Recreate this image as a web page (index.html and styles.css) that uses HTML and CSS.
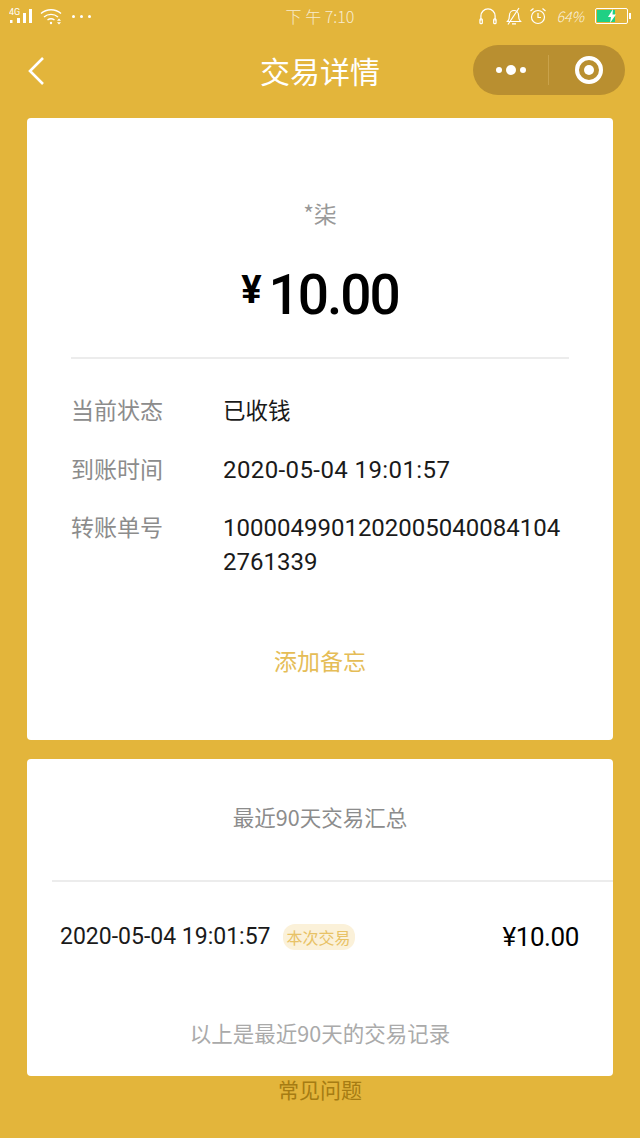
FILE: index.html
```html
<!DOCTYPE html>
<html lang="zh-CN">
<head>
  <meta charset="UTF-8"/>
  <meta name="viewport" content="width=device-width,initial-scale=1"/>
  <title>交易详情</title>
  <link rel="stylesheet" href="styles.css">
</head>
<body>

  <!-- STATUS BAR -->
  <div class="statusbar">
    <div class="status-left">
      <svg class="ic-signal" width="25" height="16" viewBox="0 0 25 16">
        <text x="0" y="6.500" class="ic-4g">4G</text>
        <rect x="1" y="12" width="2.500" height="3" fill="#fff"/>
        <rect x="8" y="10" width="3" height="5" fill="#fff"/>
        <rect x="14" y="5" width="3" height="10" fill="#fff"/>
        <rect x="20" y="1" width="3" height="14" fill="#fff"/>
      </svg>
      <svg class="ic-wifi" width="23" height="18" viewBox="0 0 23 18" fill="none" stroke="#fff" stroke-width="1.4">
        <path d="M1 6.500C6.500 1.500 15.500 1.500 21 6.500"/>
        <path d="M4 10C8 6.500 14 6.500 18 10"/>
        <path d="M7.500 13C9.500 11.500 12.500 11.500 14.500 13"/>
        <circle cx="11" cy="16" r="1.200" fill="#fff" stroke="none"/>
        <path d="M19 11.500l-2 2.200h4zM19 17.500l-2-2.200h4z" fill="#fff" stroke="none"/>
      </svg>
      <div class="dots3"><span></span><span></span><span></span></div>
    </div>
    <div class="status-time">下 午 7:10</div>
    <div class="status-right">
      <svg class="ic-phones" width="18" height="18" viewBox="0 0 19 18" fill="none" stroke="#fff" stroke-width="1.300">
        <path d="M2 14V9a7.500 7.500 0 0 1 15 0v5"/>
        <rect x="1" y="12" width="2.500" height="5" rx="1"/>
        <rect x="15.500" y="12" width="2.500" height="5" rx="1"/>
      </svg>
      <svg width="18" height="18" viewBox="0 0 18 18" fill="none" stroke="#fff" stroke-width="1.200">
        <path d="M2.500 14.500c1.500-1.500 2-3 2-6.500a4.500 4.500 0 0 1 9 0c0 3.500.5 5 2 6.500z"/>
        <path d="M7 16.800h4M3 17.500L14 1"/>
      </svg>
      <svg width="18" height="18" viewBox="0 0 18 18" fill="none" stroke="#fff" stroke-width="1.200">
        <circle cx="9" cy="10" r="6.500"/>
        <path d="M9 6v4.500h3M1.500 4L4.500 1.500M16.500 4L13.500 1.500"/>
      </svg>
      <span class="battery-pct">64%</span>
      <div class="battery">
        <div class="battery-fill"></div>
        <svg class="battery-bolt" width="10" height="14" viewBox="0 0 10 14"><path d="M6 0L1 8h3l-1 6 6-8.500H5.500z" fill="#fff"/></svg>
      </div>
      <div class="battery-tip"></div>
    </div>
  </div>

  <!-- NAV BAR -->
  <div class="navbar">
    <svg class="back" width="18" height="30" viewBox="0 0 18 30" fill="none" stroke="#fff" stroke-width="2.600">
      <path d="M16 2L3 15l13 13"/>
    </svg>
    <div class="nav-title">交易详情</div>
    <div class="capsule">
      <div class="capsule-more"><i></i><b></b><i></i></div>
      <div class="capsule-line"></div>
      <div class="capsule-close"><span></span></div>
    </div>
  </div>

  <!-- DETAIL CARD -->
  <div class="card detail">
    <div class="payee">*柒</div>
    <div class="amount"><span class="yen">¥</span>10.00</div>
    <div class="rule"></div>
    <div class="row row-first"><div class="row-label">当前状态</div><div class="row-value row-cn">已收钱</div></div>
    <div class="row"><div class="row-label">到账时间</div><div class="row-value row-date">2020-05-04 19:01:57</div></div>
    <div class="row"><div class="row-label">转账单号</div><div class="row-value">10000499012020050400841042761339</div></div>
    <div class="memo">添加备忘</div>
  </div>

  <!-- SUMMARY CARD -->
  <div class="card summary">
    <div class="summary-title">最近90天交易汇总</div>
    <div class="tx">
      <div class="tx-time">2020-05-04 19:01:57</div>
      <div class="tx-tag">本次交易</div>
      <div class="tx-amount">¥10.00</div>
    </div>
    <div class="summary-foot">以上是最近90天的交易记录</div>
  </div>

  <div class="faq">常见问题</div>

</body>
</html>
```

FILE: styles.css
```css
* { box-sizing: border-box; }
body {
  margin: 0;
  height: 1138px;
  overflow: hidden;
  background: #e3b53b;
  font-family: "Noto Sans CJK SC", "Roboto", sans-serif;
  color: #1a1a1a;
}

/* status bar */
.statusbar {
  height: 32px;
  padding: 0 9px;
  display: flex;
  align-items: center;
  justify-content: space-between;
}
.status-left, .status-right {
  display: flex;
  align-items: center;
  width: 200px;
}
.status-left { gap: 6px; }
.status-right { gap: 6px; justify-content: flex-end; }
.ic-4g { font: 9px "Roboto", sans-serif; fill: #fff; }
.ic-wifi { margin-right: 3px; }
.ic-phones { margin-right: 2px; }
.dots3 { display: flex; gap: 5px; }
.dots3 span { width: 3px; height: 3px; border-radius: 50%; background: #fff; }
.status-time {
  font-size: 16px;
  font-weight: 300;
  color: rgba(255,255,255,0.75);
  white-space: nowrap;
}
.battery-pct {
  font-size: 14px;
  font-style: italic;
  font-weight: 300;
  color: rgba(255,255,255,0.85);
  margin: 0 5px 0 3px;
}
.battery {
  position: relative;
  width: 33px;
  height: 16px;
  border: 1px solid #fff;
  border-radius: 2px;
  padding: 1px;
}
.battery-fill { width: 62%; height: 100%; background: #1fd084; }
.battery-bolt { position: absolute; left: 11px; top: 0; }
.battery-tip { width: 2px; height: 6px; background: #fff; margin-left: -5px; }

/* nav bar */
.navbar {
  position: relative;
  height: 86px;
  padding: 13px 15px 0 27px;
  display: flex;
  align-items: flex-start;
  justify-content: space-between;
}
.back { margin-top: 11px; }
.nav-title {
  position: absolute;
  left: 0;
  right: 0;
  top: 16px;
  text-align: center;
  font-size: 30px;
  line-height: 44px;
  color: #fff;
}
.capsule {
  width: 152px;
  height: 50px;
  border-radius: 25px;
  background: #b98f30;
  display: flex;
  align-items: center;
}
.capsule-more {
  width: 75px;
  display: flex;
  align-items: center;
  justify-content: center;
  gap: 4px;
}
.capsule-more i { width: 6px; height: 6px; border-radius: 50%; background: #fff; }
.capsule-more b { width: 10px; height: 10px; border-radius: 50%; background: #fff; }
.capsule-line { width: 1px; height: 30px; background: #c9a24a; }
.capsule-close { flex: 1; padding-left: 4px; display: flex; justify-content: center; }
.capsule-close span {
  width: 28px;
  height: 28px;
  border: 4px solid #fff;
  border-radius: 50%;
  display: flex;
  align-items: center;
  justify-content: center;
}
.capsule-close span::after {
  content: "";
  width: 10px;
  height: 10px;
  border-radius: 50%;
  background: #fff;
}

/* cards */
.card {
  width: 586px;
  margin: 0 0 19px 27px;
  background: #fff;
  border-radius: 4px;
}
.detail {
  height: 622px;
  padding: 79px 44px 0 44px;
}
.payee {
  text-align: center;
  font-size: 23px;
  line-height: 32px;
  color: #999;
}
.amount {
  margin-top: 26px;
  text-align: center;
  font-family: "Roboto", sans-serif;
  font-size: 55px;
  line-height: 70px;
  letter-spacing: -2px;
  color: #000;
  font-weight: 500;
}
.yen { font-size: 38px; margin-right: 9px; vertical-align: 11px; font-weight: 700; }
.rule { height: 2px; background: #ececec; margin-top: 27px; margin-bottom: 35px; }
.row { display: flex; margin-bottom: 24px; font-size: 23px; line-height: 34px; }
.row-first { margin-bottom: 27px; }
.row-label { width: 152px; flex: none; margin-top: -2px; color: #8c8c8c; }
.row-value {
  flex: 1;
  color: #1a1a1a;
  word-break: break-all;
  font-family: "Roboto", "Noto Sans CJK SC", sans-serif;
  font-size: 24px;
}
.row-cn {
  margin-top: -2px;
  font-family: "Noto Sans CJK SC", sans-serif;
  font-size: 22.500px;
}
.row-date { letter-spacing: 0.4px; }
.memo {
  margin-top: 64px;
  text-align: center;
  font-size: 23px;
  line-height: 34px;
  color: #e5bd57;
}

.summary {
  height: 317px;
  padding-top: 42px;
}
.summary-title {
  text-align: center;
  font-size: 21.500px;
  line-height: 32px;
  color: #8c8c8c;
}
.tx {
  margin: 47px 0 0 25px;
  padding: 38px 34px 0 8px;
  border-top: 2px solid #ececec;
  display: flex;
  align-items: center;
  font-family: "Roboto", "Noto Sans CJK SC", sans-serif;
}
.tx-time { font-size: 23px; line-height: 34px; }
.tx-tag {
  margin-left: 12px;
  padding: 0 4px;
  font-family: "Noto Sans CJK SC", sans-serif;
  font-size: 16px;
  line-height: 26px;
  border-radius: 12px;
  background: #fbf1d9;
  color: #e8c266;
}
.tx-amount { margin-left: auto; font-size: 26px; letter-spacing: -0.4px; line-height: 34px; color: #000; }
.summary-foot {
  margin-top: 63px;
  text-align: center;
  font-size: 21.500px;
  line-height: 32px;
  color: #aaa;
}
.faq {
  margin-top: -20px;
  text-align: center;
  font-size: 21px;
  line-height: 28px;
  color: #a67c13;
}
```
